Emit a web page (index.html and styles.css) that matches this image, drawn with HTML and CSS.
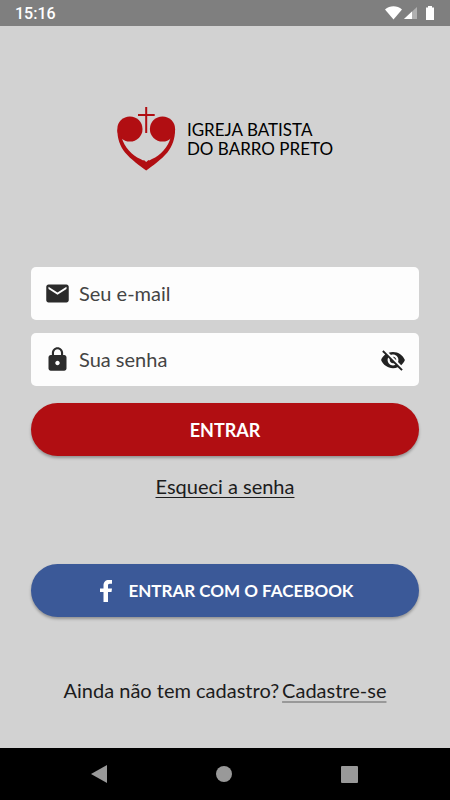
FILE: index.html
```
<!DOCTYPE html>
<html lang="pt-BR">
<head>
    <meta charset="utf-8">
    <meta name="viewport" content="width=device-width, initial-scale=1">
    <title>Igreja Batista do Barro Preto</title>
    <link rel="stylesheet" href="styles.css">
</head>
<body>
<div class="screen">

    <div class="status-bar">
        <span class="clock">15:16</span>
        <svg class="status-icons" width="50" height="18" viewBox="0 0 50 18">
            <path fill="#fff" d="M0 4.500C5 .2 12 .2 17 4.500L8.500 14.500z"/>
            <path fill="#b0b0b0" d="M32 2v12H19z"/>
            <path fill="#fff" d="M27 6.600V14h-8z"/>
            <path fill="#fff" d="M41 2.500h2V1h4v1.500h2V15h-8z"/>
        </svg>
    </div>

    <div class="content">
        <div class="logo">
            <svg width="60" height="64" viewBox="0 0 60 64">
                <g fill="#b10e12">
                    <circle cx="12.900" cy="22" r="12.600"/>
                    <circle cx="45.500" cy="22" r="12.600"/>
                    <path d="M28.200 0h2v7h7.500v2h-7.500v17h-2V9H21V7h7.200z"/>
                    <path d="M.3 22C.3 32 3 39 8 45.500 14 52.500 23 59 29.200 63.500 35.400 59 44.400 52.500 50.400 45.500 55.400 39 58.100 32 58.100 22L53.800 30C52.500 35 50 39.500 46.500 43.500 43 47.500 39.500 50 35 52 33 53 32 54 31.500 53L29.200 55 26.900 53C26.400 54 25.400 53 23.400 52 18.900 50 15.400 47.500 11.900 43.500 8.400 39.500 5.900 35 4.600 30z"/>
                </g>
            </svg>
            <h1 class="logo-name">IGREJA BATISTA<br>DO BARRO PRETO</h1>
        </div>

        <form class="login" action="#">
            <label class="field">
                <svg width="27" height="27" viewBox="0 0 24 24">
                    <path fill="#2b2b2b" d="M20 4H4c-1.100 0-2 .9-2 2v12c0 1.100.9 2 2 2h16c1.100 0 2-.9 2-2V6c0-1.100-.9-2-2-2zm0 4l-8 5-8-5V6l8 5 8-5z"/>
                </svg>
                <input type="email" name="email" placeholder="Seu e-mail" aria-label="Seu e-mail">
            </label>

            <div class="field">
                <svg width="27" height="27" viewBox="0 0 24 24">
                    <path fill="#2b2b2b" d="M18 8h-1V6c0-2.760-2.240-5-5-5S7 3.240 7 6v2H6c-1.100 0-2 .9-2 2v10c0 1.100.9 2 2 2h12c1.100 0 2-.9 2-2V10c0-1.100-.9-2-2-2zm-6 9c-1.100 0-2-.9-2-2s.9-2 2-2 2 .9 2 2-.9 2-2 2zm3.100-9H8.900V6c0-1.710 1.390-3.100 3.100-3.100s3.100 1.390 3.100 3.100z"/>
                </svg>
                <input type="password" name="senha" placeholder="Sua senha" aria-label="Sua senha">
                <button class="eye" type="button" aria-label="Mostrar senha">
                    <svg width="26" height="26" viewBox="0 0 24 24">
                        <path fill="#222" d="M12 7c2.760 0 5 2.240 5 5 0 .65-.13 1.260-.36 1.830l2.920 2.920c1.510-1.260 2.700-2.890 3.430-4.750-1.730-4.390-6-7.500-11-7.500-1.400 0-2.740.25-3.980.7l2.160 2.160C10.740 7.130 11.350 7 12 7zM2 4.270l2.280 2.280.46.46C3.080 8.300 1.780 10.020 1 12c1.730 4.390 6 7.500 11 7.500 1.550 0 3.030-.3 4.380-.84l.42.42L19.730 22 21 20.730 3.270 3zM7.530 9.800l1.550 1.550c-.05.21-.08.43-.08.65 0 1.660 1.340 3 3 3 .22 0 .44-.03.65-.08l1.550 1.550c-.67.33-1.410.53-2.200.53-2.760 0-5-2.240-5-5 0-.79.2-1.530.53-2.200zm4.310-.78l3.150 3.150.02-.16c0-1.660-1.340-3-3-3z"/>
                    </svg>
                </button>
            </div>

            <button class="btn btn-enter" type="submit">ENTRAR</button>
        </form>

        <a class="forgot" href="#">Esqueci a senha</a>

        <button class="btn btn-facebook" type="button">
            <svg width="12" height="22" viewBox="0 0 12 22">
                <path fill="#fff" d="M3.500 22V12H0V8.500h3.500V5.500C3.500 2 5.500 0 8.800 0H12v3.800H9.800C8.300 3.800 8 4.500 8 5.800v2.700h4L11.500 12H8v10z"/>
            </svg>
            ENTRAR COM O FACEBOOK
        </button>

        <p class="register">Ainda não tem cadastro?<a href="#">Cadastre-se</a></p>
    </div>

    <div class="nav-bar">
        <svg width="18" height="18" viewBox="0 0 18 18"><path fill="#999" d="M1 9L17 0v18z"/></svg>
        <svg width="18" height="18" viewBox="0 0 18 18"><circle fill="#999" cx="9" cy="9" r="8"/></svg>
        <svg width="18" height="18" viewBox="0 0 18 18"><rect fill="#999" x="1" y="1" width="17" height="17" rx="1"/></svg>
    </div>

</div>
</body>
</html>
```
FILE: styles.css
```
* {
    box-sizing: border-box;
    margin: 0;
    padding: 0;
}

body {
    background: #d2d2d2;
    color: #1c1c1c;
    font-family: Lato, "Open Sans", sans-serif;
    font-size: 20px;
    line-height: 24px;
}

.screen {
    display: flex;
    flex-direction: column;
    min-height: 100vh;
}

/* system bars */
.status-bar {
    display: flex;
    align-items: center;
    justify-content: space-between;
    height: 26px;
    padding: 2px 15px 0;
    background: #7f7f7f;
    color: #fff;
}

.clock {
    font-family: Roboto, sans-serif;
    font-size: 16px;
    font-weight: 500;
}

.nav-bar {
    display: flex;
    align-items: center;
    justify-content: space-between;
    height: 52px;
    padding: 0 92px 0 90px;
    background: #000;
}

.content {
    flex: 1;
    display: flex;
    flex-direction: column;
    align-items: center;
    padding: 81px 31px 32px;
}

.logo {
    display: flex;
    align-items: center;
    gap: 10px;
    margin-bottom: 96px;
}

.logo-name {
    color: #000;
    font-size: 17px;
    font-weight: 400;
    line-height: 19px;
    white-space: nowrap;
}

/* form */
.login {
    display: flex;
    flex-direction: column;
    width: 100%;
}

.field {
    display: flex;
    align-items: center;
    gap: 8px;
    height: 53px;
    margin-bottom: 13px;
    padding: 0 13px;
    border-radius: 5px;
    background: #fdfdfd;
}

.field input {
    flex: 1;
    min-width: 0;
    padding-bottom: 2px;
    border: 0;
    outline: 0;
    background: none;
    color: #3c3c3c;
    font: inherit;
}

.field input::placeholder {
    color: #444;
    opacity: 1;
}

.eye {
    display: flex;
    border: 0;
    background: none;
}

.btn {
    display: flex;
    align-items: center;
    justify-content: center;
    gap: 16px;
    width: 100%;
    height: 53px;
    border: 0;
    border-radius: 27px;
    box-shadow: 0 2px 3px rgba(0, 0, 0, .3);
    color: #fff;
    font: inherit;
    font-size: 18px;
    font-weight: 700;
}

.btn-enter {
    margin-top: 4px;
    background: #b10e12;
}

.btn-facebook {
    margin-bottom: 61px;
    padding-left: 4px;
    background: #3b5998;
    font-size: 17px;
}

.forgot {
    margin: 18px 0 66px;
    color: inherit;
    text-decoration-thickness: 1px;
    text-underline-offset: 3px;
}

.register {
    white-space: nowrap;
}

.register a {
    margin-left: 3px;
    color: inherit;
    text-decoration-color: #999;
    text-decoration-thickness: 2px;
    text-underline-offset: 3px;
}
```
